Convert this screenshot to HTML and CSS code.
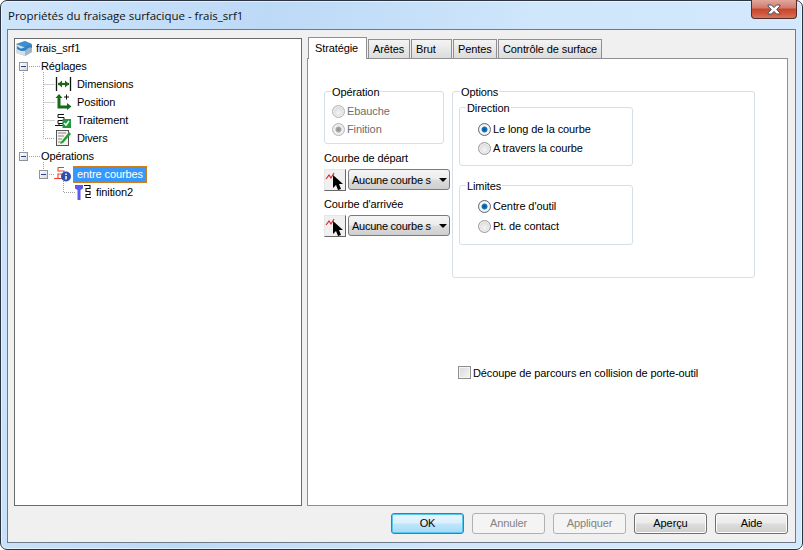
FILE: index.html
```html
<!DOCTYPE html>
<html lang="fr">
<head>
<meta charset="utf-8">
<title>Propriétés du fraisage surfacique</title>
<link rel="stylesheet" href="styles.css">
</head>
<body>
<div class="window">
  <div class="titlebar">
    <span class="title">Propriétés du fraisage surfacique - frais_srf1</span>
    <div class="close"><svg width="16" height="11" viewBox="0 0 16 11"><path d="M2 1h3.500L8 3.600 10.500 1H14v1l-3.300 3.500L14 9v1h-3.500L8 7.400 5.500 10H2V9l3.300-3.500L2 2z" fill="#fff" stroke="#47505f" stroke-width="1"/></svg></div>
  </div>
  <div class="client">
    <div class="main">
      <div class="tree">
        <svg class="tree-lines" width="287" height="180" viewBox="0 0 287 180">
          <g fill="none" stroke="#a0a0a0" stroke-width="1" stroke-dasharray="1 1">
            <path d="M8.500 33V115M14 27.500H26M28.500 33V99.500H40M28.500 45.500H40M28.500 63.500H40M28.500 81.500H40M14 117.500H26M28.500 123V135.500M34 135.500H40M48.500 142V153.500H60"/>
          </g>
        </svg>
        <div class="row lv0">
          <svg class="ic-root" width="18" height="17" viewBox="0 0 18 17"><path d="M1 4l9-3 7 3v8l-7 4-9-3z" fill="#b9c8d3"/><path d="M1 4l9 3.500V16l-9-3z" fill="#d3dee6"/><path d="M10 7.500L17 4v8l-7 4z" fill="#9ab7cc"/><path d="M1 4l9-3 7 3-7 3.500z" fill="#3f8fd0"/><path d="M2 6c3 3 5 3 8 1s4-3 7-2l0 3c-3-1-4 0-6 2s-6 1-9-1z" fill="#2f83c6"/></svg>
          <span>frais_srf1</span>
        </div>
        <div class="row lv1"><span class="exp"></span><span class="lbl-top">Réglages</span></div>
        <div class="row lv2">
          <svg class="ic" width="17" height="16" viewBox="0 0 17 16"><path d="M1.500 1v14M15.500 1v14" stroke="#111" stroke-width="1.300"/><path d="M3 8h11" stroke="#176a17" stroke-width="2.200"/><path d="M7 4.500L3 8l4 3.500zM10 4.500L14 8l-4 3.500z" fill="#176a17"/></svg>
          <span>Dimensions</span>
        </div>
        <div class="row lv2">
          <svg class="ic" width="17" height="16" viewBox="0 0 17 16"><path d="M4 3v10h9" fill="none" stroke="#176a17" stroke-width="3"/><path d="M4 0L.500 4h7zM12 9v7l4.500-3.500z" fill="#176a17"/><path d="M9 3h5M11.500 .5v5" stroke="#111" stroke-width="1"/></svg>
          <span>Position</span>
        </div>
        <div class="row lv2">
          <svg class="ic" width="17" height="16" viewBox="0 0 17 16"><path d="M3 2.500h6M3 2.500v3h6v3H3v3h5M0 13.500h8M4 11.500v2" fill="none" stroke="#111" stroke-width="1"/><rect x="7.500" y="7" width="8.500" height="9" fill="#1f9b3c"/><path d="M9 11l2 2 3-4" fill="none" stroke="#fff" stroke-width="1.500"/></svg>
          <span>Traitement</span>
        </div>
        <div class="row lv2">
          <svg class="ic" width="17" height="18" viewBox="0 0 17 18"><rect x="1.500" y="1.500" width="12" height="15" fill="#f4f4ee" stroke="#555"/><path d="M3 4h8M3 7h6M3 10h4M3 13h4" stroke="#888"/><path d="M6 13L14 3l2 2-8 9-3 1z" fill="#2a9a35"/></svg>
          <span>Divers</span>
        </div>
        <div class="row lv1"><span class="exp"></span><span class="lbl-top">Opérations</span></div>
        <div class="row lv3">
          <span class="exp"></span>
          <svg class="ic-op" width="17" height="16" viewBox="0 0 17 16"><path d="M4 1.500h6M4 1.500v3.500h6v3H4v4.500M0 12.500h8" fill="none" stroke="#e0402a" stroke-width="1.100"/><circle cx="12" cy="10.500" r="5" fill="#2f4fb0"/><path d="M12 7.500v1.500M12 10v3.500" stroke="#fff" stroke-width="1.500"/></svg>
          <span class="sel">entre courbes</span>
        </div>
        <div class="row lv4">
          <svg class="ic" width="17" height="15" viewBox="0 0 17 15"><path d="M0 0h8v3.500L5.500 5v10h-3V5L0 3.500z" fill="#5a5af0"/><path d="M9 .500h6v3h-4v3h4v3h-4v3h5" fill="none" stroke="#111" stroke-width="1.100"/></svg>
          <span class="lbl-fin">finition2</span>
        </div>
      </div>
      <div class="tabs-wrap">
        <div class="tabs">
          <div class="tab active">Stratégie</div>
          <div class="tab t-ar">Arêtes</div>
          <div class="tab t-br">Brut</div>
          <div class="tab t-pe">Pentes</div>
          <div class="tab t-co">Contrôle de surface</div>
        </div>
        <div class="pane">
          <div class="cols">
            <div class="left">
              <div class="group g-op">
                <span class="legend">Opération</span>
                <div class="radio dis"><span class="rb"></span>Ebauche</div>
                <div class="radio dis"><span class="rb on-dis"></span>Finition</div>
              </div>
              <div class="curve-label first">Courbe de départ</div>
              <div class="curve">
                <div class="pick"><svg width="20" height="20" viewBox="0 0 20 20"><path d="M1 9l3-4 2 3 3-5" fill="none" stroke="#d8262c" stroke-width="1.200"/><path d="M8 5v13l3-3 2 5 3-1-2-5h4z" fill="#000"/></svg></div>
                <div class="combo"><span class="combo-text">Aucune courbe s</span><span class="arrow"></span></div>
              </div>
              <div class="curve-label">Courbe d'arrivée</div>
              <div class="curve">
                <div class="pick"><svg width="20" height="20" viewBox="0 0 20 20"><path d="M1 9l3-4 2 3 3-5" fill="none" stroke="#d8262c" stroke-width="1.200"/><path d="M8 5v13l3-3 2 5 3-1-2-5h4z" fill="#000"/></svg></div>
                <div class="combo"><span class="combo-text">Aucune courbe s</span><span class="arrow"></span></div>
              </div>
            </div>
            <div class="group g-options">
              <span class="legend">Options</span>
              <div class="group g-sub g-dir">
                <span class="legend l-sub">Direction</span>
                <div class="radio"><span class="rb on"></span>Le long de la courbe</div>
                <div class="radio"><span class="rb"></span>A travers la courbe</div>
              </div>
              <div class="group g-sub g-lim">
                <span class="legend l-sub">Limites</span>
                <div class="radio"><span class="rb on"></span>Centre d'outil</div>
                <div class="radio r-pt"><span class="rb"></span>Pt. de contact</div>
              </div>
            </div>
          </div>
          <div class="check-row"><span class="cb"></span>Découpe de parcours en collision de porte-outil</div>
        </div>
      </div>
    </div>
    <div class="buttons">
      <div class="btn default">OK</div>
      <div class="btn disabled">Annuler</div>
      <div class="btn disabled">Appliquer</div>
      <div class="btn">Aperçu</div>
      <div class="btn">Aide</div>
    </div>
  </div>
</div>
</body>
</html>
```
FILE: styles.css
```css
* { box-sizing: border-box; }
html, body { margin: 0; padding: 0; background: #fff; }
body { width: 803px; height: 550px; overflow: hidden; font-family: "Liberation Sans", Arial, sans-serif; font-size: 11px; letter-spacing: -0.1px; color: #000; }
.window {
  width: 803px; height: 550px; padding: 0 6px 6px; border: 1px solid #2b3440; border-radius: 7px;
  background: linear-gradient(100deg, #cfe5fb 0%, #bcd9f6 30%, #cfe6fb 60%, #d5e9fd 100%);
  box-shadow: inset 0 0 0 1px rgba(255, 255, 255, .55);
  display: flex; flex-direction: column;
}
.titlebar { height: 28px; flex: none; display: flex; justify-content: space-between; }
.title { font-family: "Open Sans", "Noto Sans", sans-serif; font-size: 11.5px; letter-spacing: -0.02px; padding: 7px 0 0 1px; line-height: 16px; color: #111; }
.close {
  width: 46px; height: 19px; margin: -1px -1px 0 0; border: 1px solid #5c2a24; border-top: 0; border-radius: 0 0 4px 4px;
  background: linear-gradient(#e3a79c 0%, #cf7a6c 45%, #c8452c 50%, #d4553a 75%, #c97a68 100%);
  display: flex; align-items: center; justify-content: center;
}
.client { flex: 1; background: #f0f0f0; border: 1px solid #6d7a8a; display: flex; flex-direction: column; padding: 8px 7px 0 6px; }
.main { display: flex; gap: 5px; height: 468px; }
.tree { position: relative; width: 288px; border: 1px solid #6a6a6a; background: #fff; }
.tree-lines { position: absolute; left: 0; top: 0; }
.row { position: relative; height: 18px; display: flex; align-items: center; white-space: nowrap; line-height: 18px; }
.ic-root { margin-right: 3px; }
.lv1 { padding-left: 4px; }
.lv2 { padding-left: 40px; }
.lv3 { padding-left: 24px; }
.lv4 { padding-left: 60px; }
.exp { width: 9px; height: 9px; border: 1px solid #8d959c; background: linear-gradient(135deg, #fff, #d5d8dc); position: relative; flex: none; }
.exp::after { content: ""; position: absolute; left: 1px; right: 1px; top: 3px; height: 1px; background: #23409a; }
.lbl-top { margin-left: 13px; }
.lv2 .ic { margin-right: 5px; flex: none; }
.lbl-fin { margin-left: 4px; }
.ic-op { margin-left: 6px; margin-right: 2px; flex: none; }
.sel { background: #3399ff; color: #fff; height: 17px; line-height: 15px; padding: 0 3px 0 3px; border: 1px dotted #d98020; }
.tabs-wrap { width: 481px; display: flex; flex-direction: column; }
.tabs { display: flex; height: 20px; gap: 1px; padding-left: 1px; align-items: flex-end; }
.tab { position: relative; height: 19px; border: 1px solid #8f8f8f; border-bottom: 0; background: linear-gradient(#f4f4f4, #dcdcdc); padding-left: 4px; line-height: 19px; white-space: nowrap; }
.tab.active { width: 59px; height: 22px; background: #fff; z-index: 2; margin-bottom: -1px; padding-left: 6px; line-height: 20px; }
.t-ar { width: 42px; }
.t-br { width: 41px; }
.t-pe { width: 44px; }
.t-co { width: 104px; }
.pane { flex: 1; background: #fff; border: 1px solid #8f8f8f; padding: 32px 0 0 16px; }
.cols { display: flex; gap: 2px; align-items: flex-start; }
.left { width: 126px; }
.group { position: relative; border: 1px solid #d5dfe5; border-radius: 3px; }
.legend { position: absolute; left: 7px; top: -7px; background: #fff; padding: 0 1px; line-height: 14px; }
.l-sub { left: 6px; }
.g-op { width: 120px; height: 53px; padding: 10px 0 0 7px; }
.g-op .legend { left: 6px; }
.g-options { width: 303px; height: 187px; padding: 15px 0 0 6px; }
.g-sub { width: 174px; }
.g-dir { height: 59px; padding: 12px 0 0 18px; }
.g-lim { height: 60px; margin-top: 19px; padding: 11px 0 0 18px; }
.radio { display: flex; align-items: center; height: 18px; white-space: nowrap; }
.r-pt { margin-top: 2px; }
.g-dir .radio + .radio { margin-top: 1px; }
.radio.dis { color: #6d6d6d; }
.rb { width: 13px; height: 13px; border-radius: 50%; border: 1px solid #9a9a9a; margin-right: 2px; flex: none; background: radial-gradient(circle at 50% 60%, #f4f4f4, #cfcfcf); box-shadow: inset 0 0 0 1px #eee; }
.rb.on { background: radial-gradient(circle, #0a4f86 0, #1079c6 2.500px, #fff 3.500px, #e4e4e4 100%); border-color: #5f6770; }
.rb.on-dis { background: radial-gradient(circle, #8f8f8f 0, #a8a8a8 2.500px, #f2f2f2 3.500px, #d0d0d0 100%); }
.dis .rb { border-color: #b5b5b5; }
.curve-label { line-height: 14px; margin-top: 6px; height: 16px; }
.curve-label.first { margin-top: 7px; }
.curve { display: flex; gap: 2px; margin-top: 2px; height: 22px; }
.pick { width: 22px; height: 22px; border: 1px solid; border-color: #e6e6e6 #666 #666 #e6e6e6; background: #f0f0f0; overflow: hidden; display: flex; align-items: flex-start; }
.pick svg { flex: none; }
.combo { width: 102px; height: 21px; border: 1px solid #7a7a7a; border-radius: 3px; background: linear-gradient(#f5f5f5 0%, #ececec 48%, #dcdcdc 52%, #cfcfcf 100%); display: flex; align-items: center; padding-left: 3px; }
.combo-text { width: 78px; white-space: nowrap; letter-spacing: -0.25px; }
.arrow { width: 0; height: 0; border-left: 4px solid transparent; border-right: 4px solid transparent; border-top: 4px solid #000; margin-left: 9px; }
.check-row { display: flex; align-items: center; margin: 88px 0 0 134px; height: 13px; white-space: nowrap; }
.cb { width: 13px; height: 13px; border: 1px solid #8e8f8f; background: linear-gradient(135deg, #d8d8d8, #f6f6f6); margin-right: 2px; box-shadow: inset 0 0 0 1px #f4f4f4; flex: none; }
.buttons { display: flex; justify-content: flex-end; gap: 8px; padding-top: 7px; }
.btn { width: 73px; height: 21px; border: 1px solid #707070; border-radius: 3px; text-align: center; line-height: 19px; background: linear-gradient(#f3f3f3 0%, #ebebeb 48%, #dddddd 52%, #cfcfcf 100%); box-shadow: inset 0 0 0 1px #fcfcfc; }
.btn.default { border-color: #3c7fb1; background: linear-gradient(#eaf6fd 0%, #d9f0fc 48%, #bee6fd 52%, #a7d9f5 100%); box-shadow: inset 0 0 0 1px #55c8f2; }
.btn.disabled { border-color: #adb2b5; background: #f4f4f4; color: #838383; box-shadow: none; }
```
